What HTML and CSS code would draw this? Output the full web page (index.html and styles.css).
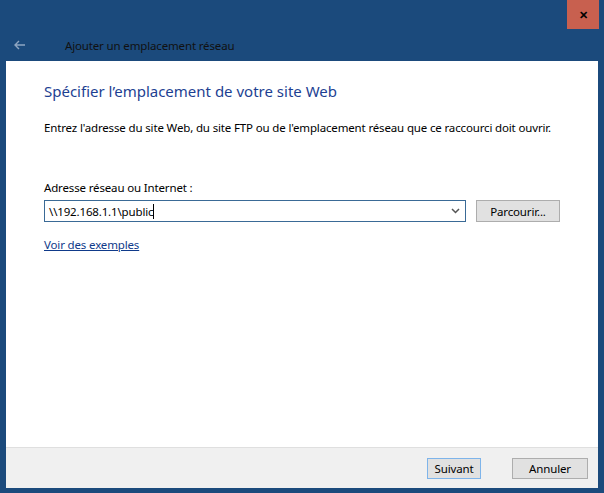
FILE: index.html
```html
<!DOCTYPE html>
<html lang="fr">
<head>
    <meta charset="UTF-8">
    <title>Ajouter un emplacement réseau</title>
    <link rel="stylesheet" href="styles.css">
</head>
<body>
    <div class="window">
        <div class="titlebar">
            <div class="close">&#x2715;</div>
        </div>

        <!-- Nav bar -->
        <div class="navbar">
            <svg class="back" width="12" height="10" viewBox="0 0 12 10">
                <path d="M5 1 L1 5 L5 9 M1 5 H11" fill="none" stroke="#8fa6c2" stroke-width="1.4"/>
            </svg>
            <span class="nav-title">Ajouter un emplacement réseau</span>
        </div>

        <div class="content">
            <h1>Spécifier l’emplacement de votre site Web</h1>
            <p class="intro">Entrez l'adresse du site Web, du site FTP ou de l'emplacement réseau que ce raccourci doit ouvrir.</p>

            <label class="field-label">Adresse réseau ou Internet :</label>
            <div class="field-row">
                <div class="combo">
                    <span class="combo-value">\\192.168.1.1\public</span><span class="caret"></span>
                    <svg class="chevron" width="9" height="6" viewBox="0 0 9 6">
                        <path d="M1 1 L4.5 4.5 L8 1" fill="none" stroke="#555" stroke-width="1.5"/>
                    </svg>
                </div>
                <button class="btn">Parcourir...</button>
            </div>

            <a class="link" href="#">Voir des exemples</a>
        </div>

        <div class="footer">
            <button class="btn btn-default">Suivant</button>
            <button class="btn">Annuler</button>
        </div>
    </div>
</body>
</html>
```

FILE: styles.css
```css
/* Base */
body {
    margin: 0;
    font-family: 'Noto Sans', 'Open Sans', sans-serif;
    font-size: 11.5px;
    letter-spacing: -0.15px;
    background: #1b4a7c;
    color: #000;
}

.window {
    height: 493px;
    display: flex;
    flex-direction: column;
}

.titlebar {
    height: 29px;
    display: flex;
    justify-content: flex-end;
    padding-right: 5px;
}

.close {
    width: 32px;
    height: 29px;
    background: #c8604f;
    color: #000;
    font-size: 11px;
    font-weight: bold;
    display: flex;
    align-items: center;
    justify-content: center;
}

.navbar {
    height: 32px;
    display: flex;
    align-items: center;
}

.back {
    margin-left: 14px;
    margin-right: 39px;
}

.nav-title {
    color: #111;
}

.content {
    flex: 1;
    margin: 0 6px;
    background: #fff;
    padding: 0 38px;
}

h1 {
    margin: 20px 0 0;
    font-size: 15px;
    font-weight: normal;
    letter-spacing: 0;
    color: #1d3f92;
}

.intro {
    margin: 19px 0 0;
}

.field-label {
    display: block;
    margin-top: 45px;
}

.field-row {
    display: flex;
    align-items: center;
    margin-top: 5px;
}

.combo {
    width: 421px;
    height: 20px;
    border: 1px solid #3a6a96;
    display: flex;
    align-items: center;
    padding-left: 4px;
    box-sizing: content-box;
    margin-right: 10px;
}

.combo-value {
    flex: none;
}

.caret {
    width: 1px;
    height: 15px;
    background: #000;
}

.chevron {
    margin-left: auto;
    margin-right: 5px;
}

.btn {
    font-family: inherit;
    font-size: 11.5px;
    letter-spacing: -0.15px;
    background: #e1e1e1;
    border: 1px solid #adadad;
    color: #000;
    height: 22px;
    width: 85px;
    padding: 0;
}

.link {
    display: inline-block;
    margin-top: 15px;
    color: #0f3a8a;
    text-decoration: underline;
}

.footer {
    height: 40px;
    margin: 0 6px 5px;
    background: #f0f0f0;
    border-top: 1px solid #dfdfdf;
    display: flex;
    justify-content: flex-end;
    align-items: center;
    padding-right: 10px;
}

.footer .btn {
    height: 21px;
    width: 76px;
}

.footer .btn-default {
    width: 54px;
    border-color: #7eb4ea;
    margin-right: 31px;
}
```
